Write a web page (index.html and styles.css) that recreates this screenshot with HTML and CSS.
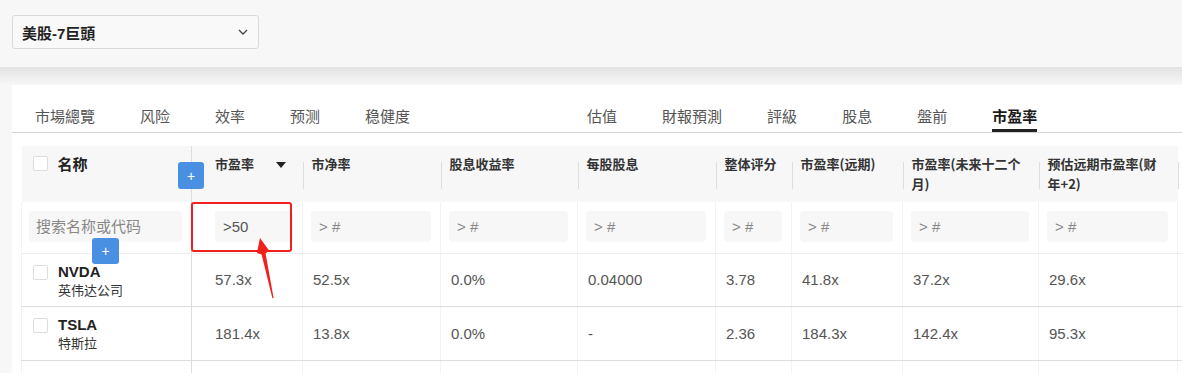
FILE: index.html
```html
<!DOCTYPE html>
<html lang="zh">
<head>
    <meta charset="UTF-8">
    <meta name="viewport" content="width=device-width, initial-scale=1.0">
    <title>美股-7巨頭</title>
    <link rel="stylesheet" href="styles.css">
</head>
<body>
    <div class="topbar">
        <div class="select">
            <span>美股-7巨頭</span>
            <svg width="10" height="6" viewBox="0 0 10 6"><polyline points="1,1 5,5 9,1" fill="none" stroke="#444" stroke-width="1.3"/></svg>
        </div>
    </div>
    <div class="main">
        <div class="card">
            <nav class="tabs">
                <div class="tab-group">
                    <span class="tab">市場總覽</span>
                    <span class="tab">风险</span>
                    <span class="tab">效率</span>
                    <span class="tab">预测</span>
                    <span class="tab">稳健度</span>
                </div>
                <div class="tab-group right">
                    <span class="tab">估值</span>
                    <span class="tab">財報預測</span>
                    <span class="tab">評級</span>
                    <span class="tab">股息</span>
                    <span class="tab">盤前</span>
                    <span class="tab active">市盈率</span>
                </div>
            </nav>
            <div class="table-wrap">
                <table class="screener">
                    <colgroup>
                        <col style="width:170px">
                        <col style="width:111px">
                        <col style="width:138px">
                        <col style="width:137px">
                        <col style="width:138px">
                        <col style="width:76px">
                        <col style="width:111px">
                        <col style="width:136px">
                        <col style="width:139px">
                        <col style="width:5px">
                    </colgroup>
                    <thead>
                        <tr class="head-row">
                            <th class="name-col"><div class="name-head"><span class="check"></span>名称</div></th>
                            <th class="pe-col">市盈率<span class="sort"></span></th>
                            <th class="div">市净率</th>
                            <th class="div">股息收益率</th>
                            <th class="div">每股股息</th>
                            <th class="div">整体评分</th>
                            <th class="div">市盈率(远期)</th>
                            <th class="div">市盈率(未来十二个月)</th>
                            <th class="div">预估远期市盈率(财年+2)</th>
                            <th class="div tail"></th>
                        </tr>
                        <tr class="filter-row">
                            <td class="name-col"><input class="filter name-filter" placeholder="搜索名称或代码"></td>
                            <td class="pe-col"><input class="filter" value="&gt;50"></td>
                            <td><input class="filter" placeholder="&gt; #"></td>
                            <td><input class="filter" placeholder="&gt; #"></td>
                            <td><input class="filter" placeholder="&gt; #"></td>
                            <td><input class="filter" placeholder="&gt; #"></td>
                            <td><input class="filter" placeholder="&gt; #"></td>
                            <td><input class="filter" placeholder="&gt; #"></td>
                            <td><input class="filter" placeholder="&gt; #"></td>
                            <td class="tail"></td>
                        </tr>
                    </thead>
                    <tbody>
                        <tr class="stock-row first">
                            <td class="name-col">
                                <div class="stock">
                                    <span class="check"></span>
                                    <div>
                                        <div class="ticker">NVDA</div>
                                        <div class="company">英伟达公司</div>
                                    </div>
                                </div>
                            </td>
                            <td class="pe-col">57.3x</td>
                            <td>52.5x</td>
                            <td>0.0%</td>
                            <td>0.04000</td>
                            <td>3.78</td>
                            <td>41.8x</td>
                            <td>37.2x</td>
                            <td>29.6x</td>
                            <td class="tail"></td>
                        </tr>
                        <tr class="stock-row">
                            <td class="name-col">
                                <div class="stock">
                                    <span class="check"></span>
                                    <div>
                                        <div class="ticker">TSLA</div>
                                        <div class="company">特斯拉</div>
                                    </div>
                                </div>
                            </td>
                            <td class="pe-col">181.4x</td>
                            <td>13.8x</td>
                            <td>0.0%</td>
                            <td>-</td>
                            <td>2.36</td>
                            <td>184.3x</td>
                            <td>142.4x</td>
                            <td>95.3x</td>
                            <td class="tail"></td>
                        </tr>
                        <tr class="stock-row blank">
                            <td class="name-col"></td>
                            <td class="pe-col"></td>
                            <td></td><td></td><td></td><td></td><td></td><td></td><td></td>
                            <td class="tail"></td>
                        </tr>
                    </tbody>
                </table>
                <button class="add-btn add-col">+</button>
                <button class="add-btn add-row">+</button>
                <div class="highlight"></div>
                <svg class="arrow" width="30" height="70" viewBox="0 0 30 70">
                    <polygon points="10,6 19,18.4 15.6,21.6 23.6,66 22.4,66.2 11.6,22.4 6.9,21" fill="#f0201c"/>
                </svg>
            </div>
        </div>
    </div>
</body>
</html>
```

FILE: styles.css
```css
html, body {
    height: 373px;
}
body {
    margin: 0;
    background-color: #f7f7f7;
    font-family: "Liberation Sans", "Noto Sans CJK SC", sans-serif;
    color: #333;
    overflow: hidden;
}
.topbar {
    height: 67px;
    box-sizing: border-box;
    padding: 15px 12px;
}
.select {
    width: 247px;
    height: 34px;
    box-sizing: border-box;
    border: 1px solid #d9d9d9;
    border-radius: 3px;
    background-color: #f9f9f9;
    padding: 0 10px 0 9px;
    display: flex;
    align-items: center;
    justify-content: space-between;
    font-size: 15px;
    font-weight: bold;
    color: #222;
}
.main {
    background: linear-gradient(#e2e2e2, #f7f7f7 18px);
    padding: 18px 0 0 12px;
    height: 306px;
    box-sizing: border-box;
}
.card {
    background-color: white;
    height: 100%;
    overflow: hidden;
}
.tabs {
    display: flex;
    padding-top: 20px;
    border-bottom: 1px solid #d4d4d4;
    font-family: "Noto Sans CJK SC", sans-serif;
    font-size: 15px;
}
.tab-group {
    display: flex;
    gap: 45px;
    padding-left: 23px;
}
.tab-group.right {
    padding-left: 0;
    margin-left: 177px;
}
.tab {
    line-height: 22px;
    padding-bottom: 2px;
    border-bottom: 3px solid transparent;
    color: #555;
}
.tab.active {
    color: #1a1a1a;
    font-weight: bold;
    border-bottom-color: #222;
}
.table-wrap {
    position: relative;
    margin: 13px 0 0 9px;
}
.screener {
    table-layout: fixed;
    width: 1161px;
    border-collapse: collapse;
}
.screener th {
    position: relative;
    background-color: #f7f7f7;
    text-align: left;
    vertical-align: top;
    padding: 8px 9px 0;
    font-size: 13px;
    font-weight: bold;
    line-height: 20px;
    color: #333;
    font-family: "Noto Sans CJK SC", sans-serif;
}
.screener th.div::before {
    content: "";
    position: absolute;
    left: 0;
    top: 16px;
    height: 27px;
    width: 1px;
    background-color: #ddd;
}
.screener th.tail {
    background-color: white;
    padding: 0;
}
.head-row {
    height: 56px;
}
.name-col {
    border-right: 1px solid #ddd;
}
.screener th.name-col {
    padding-left: 11px;
}
.name-head {
    display: flex;
    gap: 10px;
    font-size: 15px;
    color: #222;
}
.check {
    flex: none;
    width: 15px;
    height: 15px;
    box-sizing: border-box;
    margin-top: 2px;
    border: 1px solid #ddd;
    border-radius: 2px;
    background-color: white;
}
.screener th.pe-col {
    padding-left: 23px;
}
.sort {
    display: inline-block;
    margin-left: 22px;
    vertical-align: middle;
    border-left: 5px solid transparent;
    border-right: 5px solid transparent;
    border-top: 6px solid #222;
}
.screener td {
    border-left: 1px solid #f3f3f3;
}
.screener td.pe-col {
    border-left: none;
}
.filter-row {
    height: 51px;
}
.filter-row td {
    vertical-align: top;
    padding: 9px 9px 0 8px;
    border-bottom: 1px solid #eee;
}
.filter-row td.name-col {
    padding-left: 7px;
}
.filter-row td.pe-col {
    padding-left: 23px;
}
.filter {
    display: block;
    width: 100%;
    height: 31px;
    box-sizing: border-box;
    border: none;
    border-radius: 4px;
    background-color: #f7f7f7;
    padding: 0 8px;
    font-family: "Liberation Sans", "Noto Sans CJK SC", sans-serif;
    font-size: 15px;
    color: #555;
    outline: none;
}
.filter::placeholder {
    color: #888;
}
.name-filter {
    padding-left: 7px;
}
.stock-row {
    height: 54px;
}
.stock-row.first {
    height: 53px;
}
.stock-row td {
    padding: 0 9px 0 10px;
    font-size: 15px;
    color: #555;
    border-bottom: 1px solid #ddd;
}
.stock-row td.pe-col {
    padding-left: 23px;
}
.stock-row td.name-col {
    vertical-align: top;
    padding: 9px 11px 0;
}
.stock-row.blank td {
    border-bottom: none;
}
.stock {
    display: flex;
    gap: 10px;
}
.ticker {
    font-size: 15px;
    font-weight: bold;
    line-height: 18px;
    color: #222;
}
.company {
    font-family: "Noto Sans CJK SC", sans-serif;
    font-size: 13px;
    line-height: 17px;
    color: #333;
}
.add-btn {
    position: absolute;
    padding: 0;
    border: none;
    border-radius: 3px;
    background-color: #4a90e2;
    color: white;
    font-family: "Liberation Sans", sans-serif;
    font-size: 14px;
    line-height: 1;
    cursor: pointer;
}
.add-col {
    left: 157px;
    top: 16px;
    width: 26px;
    height: 27px;
}
.add-row {
    left: 71px;
    top: 92px;
    width: 27px;
    height: 26px;
}
.highlight {
    position: absolute;
    left: 170px;
    top: 56px;
    width: 101px;
    height: 50px;
    box-sizing: border-box;
    border: 2px solid #f0201c;
    border-radius: 3px;
}
.arrow {
    position: absolute;
    left: 229px;
    top: 86px;
}
```
